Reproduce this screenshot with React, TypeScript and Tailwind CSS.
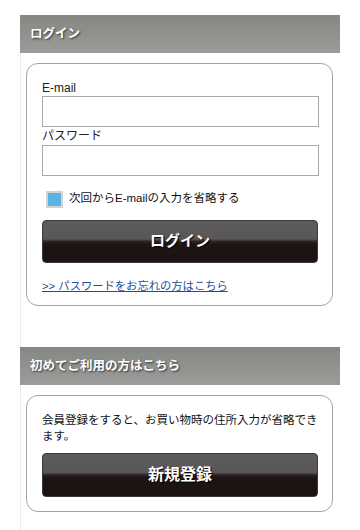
import React from "react";

const jp = { fontFamily: '"Liberation Sans", "Noto Sans CJK JP", sans-serif' };

function Header({ title }: { title: string }) {
  return (
    <div className="-ml-px w-[320px] h-[38px] flex items-center pl-[10px] bg-[linear-gradient(to_bottom,#858783,#9c9d9a)]">
      <span className="text-white font-bold text-[12.5px] [text-shadow:1px_1px_2px_#333]">{title}</span>
    </div>
  );
}

function DarkButton({ label, size, h }: { label: string; size: string; h: string }) {
  return (
    <button
      className={`w-[276px] ${h} rounded-[4px] border border-[#3a3a3a] flex items-center justify-center bg-[linear-gradient(to_bottom,#5d5b5c_0%,#585657_44%,#2c2422_50%,#1d1513_56%,#1b1311_100%)]`}
    >
      <span className={`text-white font-bold ${size} [text-shadow:1px_1px_1px_#000]`}>{label}</span>
    </button>
  );
}

export default function App() {
  return (
    <div className="w-[360px] h-[530px] overflow-hidden bg-white pt-[15px]" style={jp}>
      <div className="ml-[20px] w-[320px] border-l border-[#ededed] h-[520px]">
        <Header title="ログイン" />
        <div className="mt-[10px] ml-[5px] w-[307px] border border-[#a3a3a3] rounded-[12px] pt-[16px] pl-[15px] pr-[13px] pb-[11px]">
          <div className="text-[12px] leading-[16px] text-[#222]">E-mail</div>
          <div className="w-[277px] h-[31px] border border-[#a9a9a9] bg-white" />
          <div className="text-[12px] leading-[18px] text-[#222]">パスワード</div>
          <div className="w-[277px] h-[31px] border border-[#a9a9a9] bg-white" />
          <div className="mt-[15px] flex items-center h-[16px] pl-[4px]">
            <div className="w-[17px] h-[17px] border-2 border-[#d2d2d2] bg-[#58b4e0]" />
            <span className="ml-[6px] text-[11.5px] text-[#111]">次回からE-mailの入力を省略する</span>
          </div>
          <div className="mt-[13px]">
            <DarkButton label="ログイン" size="text-[15px]" h="h-[43px]" />
          </div>
          <div className="mt-[15px] text-[11.3px] leading-[16px]">
            <a className="text-[#1a4e9c] underline" href="#">&gt;&gt; パスワードをお忘れの方はこちら</a>
          </div>
        </div>
        <div className="h-[41px]" />
        <Header title="初めてご利用の方はこちら" />
        <div className="mt-[10px] ml-[5px] w-[307px] border border-[#a3a3a3] rounded-[12px] pt-[16px] pl-[15px] pr-[13px] pb-[14px]">
          <p className="text-[11.5px] leading-[16px] text-[#111]">会員登録をすると、お買い物時の住所入力が省略できます。</p>
          <div className="mt-[9px]">
            <DarkButton label="新規登録" size="text-[16px]" h="h-[44px]" />
          </div>
        </div>
      </div>
    </div>
  );
}
